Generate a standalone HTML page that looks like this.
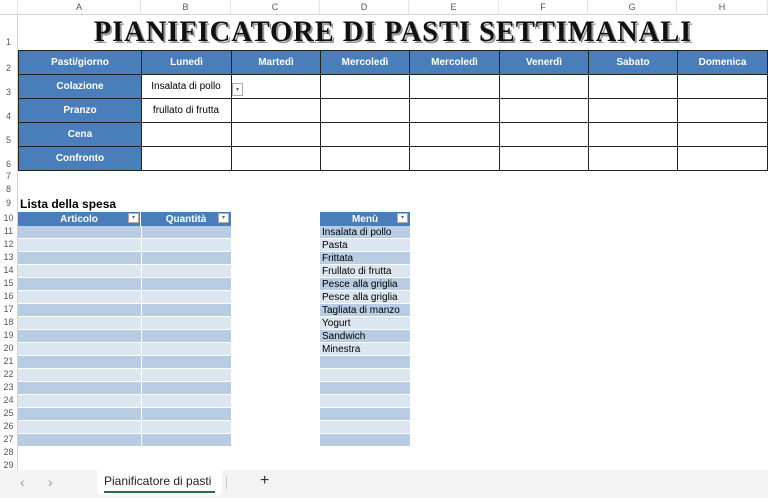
<!DOCTYPE html>
<html><head><meta charset="utf-8"><style>
*{margin:0;padding:0;box-sizing:border-box}
body{width:768px;height:498px;background:#fff;position:relative;overflow:hidden;font-family:"Liberation Sans",sans-serif;font-size:10px;color:#000}
.a{position:absolute}
.colh{top:0;height:15px;background:#fff;border-bottom:1px solid #d4d4d4;color:#555;font-size:9px;text-align:center;line-height:15px;border-right:1px solid #e4e4e4}
.rowh{left:0;width:18px;color:#555;font-size:9px;text-align:center;border-right:1px solid #d4d4d4}
.c{position:absolute;display:flex;align-items:center;justify-content:center;font-size:10px}
.hd{background:#4a7ebb;color:#fff;font-weight:bold;border:1px solid #222}
.dd{position:absolute;width:11px;height:10px;background:#fff;border:1px solid #aaa;font-size:6px;color:#666;text-align:center;line-height:9px}
</style></head><body>
<div class="a colh" style="left:0;width:18px"></div>
<div class="a colh" style="left:18px;width:123px">A</div>
<div class="a colh" style="left:141px;width:90px">B</div>
<div class="a colh" style="left:231px;width:89px">C</div>
<div class="a colh" style="left:320px;width:89px">D</div>
<div class="a colh" style="left:409px;width:90px">E</div>
<div class="a colh" style="left:499px;width:89px">F</div>
<div class="a colh" style="left:588px;width:89px">G</div>
<div class="a colh" style="left:677px;width:91px">H</div>

<div class="a rowh" style="top:15px;height:455px"></div>
<div class="a rowh" style="top:37px">1</div>
<div class="a rowh" style="top:63px">2</div>
<div class="a rowh" style="top:87px">3</div>
<div class="a rowh" style="top:111px">4</div>
<div class="a rowh" style="top:135px">5</div>
<div class="a rowh" style="top:159px">6</div>
<div class="a rowh" style="top:171px">7</div>
<div class="a rowh" style="top:184px">8</div>
<div class="a rowh" style="top:198px">9</div>
<div class="a rowh" style="top:213px">10</div>
<div class="a rowh" style="top:226px">11</div>
<div class="a rowh" style="top:239px">12</div>
<div class="a rowh" style="top:252px">13</div>
<div class="a rowh" style="top:265px">14</div>
<div class="a rowh" style="top:278px">15</div>
<div class="a rowh" style="top:291px">16</div>
<div class="a rowh" style="top:304px">17</div>
<div class="a rowh" style="top:317px">18</div>
<div class="a rowh" style="top:330px">19</div>
<div class="a rowh" style="top:343px">20</div>
<div class="a rowh" style="top:356px">21</div>
<div class="a rowh" style="top:369px">22</div>
<div class="a rowh" style="top:382px">23</div>
<div class="a rowh" style="top:395px">24</div>
<div class="a rowh" style="top:408px">25</div>
<div class="a rowh" style="top:421px">26</div>
<div class="a rowh" style="top:434px">27</div>
<div class="a rowh" style="top:447px">28</div>
<div class="a rowh" style="top:460px">29</div>

<div class="a" style="left:18px;width:750px;top:14px;text-align:center;font-family:'Liberation Serif',serif;font-weight:bold;font-size:30px;line-height:36px;color:#111;text-shadow:2px 2px 0 #999;transform:scaleX(0.95);letter-spacing:1px">PIANIFICATORE DI PASTI SETTIMANALI</div>

<div class="c hd" style="left:18px;top:50px;width:124px;height:25px">Pasti/giorno</div>
<div class="c hd" style="left:141px;top:50px;width:91px;height:25px">Lunedì</div>
<div class="c hd" style="left:231px;top:50px;width:90px;height:25px">Martedì</div>
<div class="c hd" style="left:320px;top:50px;width:90px;height:25px">Mercoledì</div>
<div class="c hd" style="left:409px;top:50px;width:91px;height:25px">Mercoledì</div>
<div class="c hd" style="left:499px;top:50px;width:90px;height:25px">Venerdì</div>
<div class="c hd" style="left:588px;top:50px;width:90px;height:25px">Sabato</div>
<div class="c hd" style="left:677px;top:50px;width:91px;height:25px">Domenica</div>

<div class="c hd" style="left:18px;top:74px;width:124px;height:25px">Colazione</div>
<div class="c hd" style="left:18px;top:98px;width:124px;height:25px">Pranzo</div>
<div class="c hd" style="left:18px;top:122px;width:124px;height:25px">Cena</div>
<div class="c hd" style="left:18px;top:146px;width:124px;height:25px">Confronto</div>

<div class="a" style="left:141px;top:74px;width:627px;height:97px;border:1px solid #222;background:
linear-gradient(#222,#222) 89px 0/1px 100% no-repeat,
linear-gradient(#222,#222) 178px 0/1px 100% no-repeat,
linear-gradient(#222,#222) 267px 0/1px 100% no-repeat,
linear-gradient(#222,#222) 357px 0/1px 100% no-repeat,
linear-gradient(#222,#222) 446px 0/1px 100% no-repeat,
linear-gradient(#222,#222) 535px 0/1px 100% no-repeat,
linear-gradient(#222,#222) 0 23px/100% 1px no-repeat,
linear-gradient(#222,#222) 0 47px/100% 1px no-repeat,
linear-gradient(#222,#222) 0 71px/100% 1px no-repeat,#fff"></div>
<div class="c" style="left:141px;top:74px;width:90px;height:24px">Insalata di pollo</div>
<div class="c" style="left:141px;top:98px;width:90px;height:24px">frullato di frutta</div>
<div class="dd" style="left:232px;top:83px;height:13px;line-height:12px">▾</div>

<div class="a" style="left:20px;top:197px;font-weight:bold;font-size:12px">Lista della spesa</div>

<div class="c hd" style="left:18px;top:212px;width:123px;height:14px;border:none;border-right:1px solid #fff">Articolo</div>
<div class="c hd" style="left:141px;top:212px;width:90px;height:14px;border:none">Quantità</div>
<div class="c hd" style="left:320px;top:212px;width:90px;height:14px;border:none">Menù</div>
<div class="dd" style="left:128px;top:213px">▾</div>
<div class="dd" style="left:218px;top:213px">▾</div>
<div class="dd" style="left:397px;top:213px">▾</div>

<div class="a" style="left:18px;top:226px;width:213px;height:221px;background:linear-gradient(90deg,transparent 123px,#fff 123px,#fff 124px,transparent 124px),repeating-linear-gradient(#b8cce4 0 12px,#fff 12px 13px,#dce6f1 13px 25px,#fff 25px 26px)"></div>
<div class="a" style="left:320px;top:226px;width:90px;height:221px;background:repeating-linear-gradient(#b8cce4 0 12px,#fff 12px 13px,#dce6f1 13px 25px,#fff 25px 26px)"></div>
<div class="a" style="left:322px;top:226px;line-height:13px;font-size:10px">Insalata di pollo<br>Pasta<br>Frittata<br>Frullato di frutta<br>Pesce alla griglia<br>Pesce alla griglia<br>Tagliata di manzo<br>Yogurt<br>Sandwich<br>Minestra</div>

<div class="a" style="left:0;top:470px;width:768px;height:28px;background:#f3f3f3"></div>
<div class="a" style="left:20px;top:474px;color:#999;font-size:14px">‹</div>
<div class="a" style="left:48px;top:474px;color:#999;font-size:14px">›</div>
<div class="a" style="left:97px;top:470px;width:125px;height:25px;background:#fff;border-radius:0 0 4px 4px"></div>
<div class="a" style="left:104px;top:474px;font-size:12px;color:#222">Pianificatore di pasti</div>
<div class="a" style="left:104px;top:491px;width:111px;height:2px;background:#217346"></div>
<div class="a" style="left:226px;top:476px;width:1px;height:14px;background:#ccc"></div>
<div class="a" style="left:260px;top:472px;font-size:16px;color:#333">+</div>
</body></html>
